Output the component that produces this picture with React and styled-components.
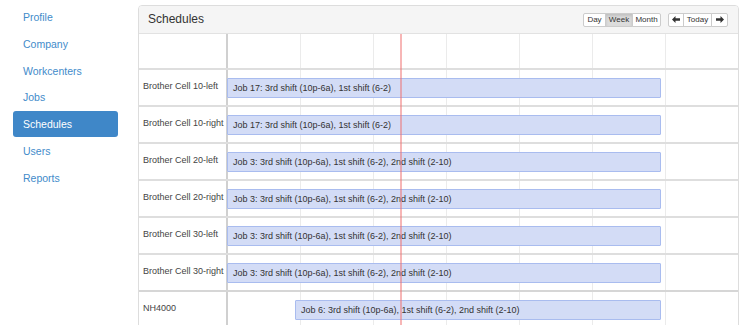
import React from "react";
import styled, { createGlobalStyle } from "styled-components";

const Global = createGlobalStyle`
  html, body { margin: 0; padding: 0; background: #fff; }
  body { font-family: "Liberation Sans", Arial, sans-serif; color: #333; overflow: hidden; }
  * { box-sizing: border-box; }
`;

const Page = styled.div`
  display: flex;
  width: 750px;
  height: 325px;
  overflow: hidden;
`;

const Sidebar = styled.nav`
  width: 138px;
  flex: none;
  padding: 4px 0 0 13px;
  display: flex;
  flex-direction: column;
  gap: 0.8px;
`;

const NavItem = styled.a`
  display: flex;
  align-items: center;
  width: 105px;
  height: 26px;
  padding-left: 10px;
  border-radius: 3px;
  font-size: 10.5px;
  text-decoration: none;
  color: ${(p) => (p.$active ? "#fff" : "#428bca")};
  background: ${(p) => (p.$active ? "#3f87c8" : "transparent")};
`;

const Panel = styled.section`
  margin-top: 5px;
  width: 601px;
  height: 330px;
  border: 1px solid #ddd;
  border-radius: 4px 4px 0 0;
  overflow: hidden;
  flex: none;
`;

const Heading = styled.header`
  height: 28px;
  background: #f5f5f5;
  border-bottom: 1px solid #e2e2e2;
  display: flex;
  align-items: center;
  padding: 0 10px 0 9px;
`;

const Title = styled.h3`
  margin: 0;
  font-size: 12px;
  font-weight: 500;
  color: #333;
  flex: 1;
  padding-bottom: 1px;
`;

const BtnGroup = styled.div`
  display: flex;
  margin-left: 7px;
`;

const Btn = styled.button`
  height: 14px;
  width: ${(p) => p.$w}px;
  padding: 0;
  margin-left: -1px;
  font-family: inherit;
  font-size: 8px;
  color: #333;
  border: 1px solid #ccc;
  background: ${(p) => (p.$active ? "#dcdcdc" : "#fff")};
  box-shadow: ${(p) => (p.$active ? "inset 0 2px 3px rgba(0,0,0,0.12)" : "none")};
  display: flex;
  align-items: center;
  justify-content: center;
  &:first-child { border-radius: 2px 0 0 2px; margin-left: 0; }
  &:last-child { border-radius: 0 2px 2px 0; }
`;

const Grid = styled.div`
  position: relative;
`;

const Row = styled.div`
  display: flex;
  height: ${(p) => (p.$head ? 36 : 37)}px;
  border-bottom: 2px solid ${(p) => (p.$double ? "#d6d6d6" : "#dedede")};
`;

const Label = styled.div`
  width: 89px;
  flex: none;
  border-right: 2px solid #d0d0d0;
  font-size: 9px;
  color: #444;
  display: flex;
  align-items: center;
  padding: 0 0 3px 4px;
  white-space: nowrap;
`;

const Timeline = styled.div`
  position: relative;
  flex: 1;
  display: flex;
`;

const Day = styled.div`
  width: 73px;
  flex: none;
  border-right: 1px solid #ebebeb;
  &:last-child { border-right: none; flex: 1; }
`;

const Bar = styled.div`
  position: absolute;
  top: 8px;
  height: 20px;
  border: 1px solid #a9bcef;
  background: #d3dcf6;
  border-radius: 1px;
  font-size: 9px;
  color: #333;
  display: flex;
  align-items: center;
  padding-left: 5px;
  white-space: nowrap;
`;

const NowLine = styled.div`
  position: absolute;
  z-index: 2;
  top: 0;
  bottom: 0;
  left: 261px;
  width: 2px;
  background-color: rgba(240, 110, 110, 0.5);
`;

const Arrow = ({ dir }) => (
  <svg width="8" height="7" viewBox="0 0 8 7">
    <path
      d={dir === "left" ? "M0 3.5 L3.5 0 V2.3 H8 V4.7 H3.5 V7 Z" : "M8 3.5 L4.5 0 V2.3 H0 V4.7 H4.5 V7 Z"}
      fill="#333"
    />
  </svg>
);

const navItems = ["Profile", "Company", "Workcenters", "Jobs", "Schedules", "Users", "Reports"];

const J17 = "Job 17: 3rd shift (10p-6a), 1st shift (6-2)";
const J3 = "Job 3: 3rd shift (10p-6a), 1st shift (6-2), 2nd shift (2-10)";
const rows = [
  { name: "Brother Cell 10-left", job: J17, left: -1, width: 434 },
  { name: "Brother Cell 10-right", job: J17, left: -1, width: 434 },
  { name: "Brother Cell 20-left", job: J3, left: -1, width: 434 },
  { name: "Brother Cell 20-right", job: J3, left: -1, width: 434 },
  { name: "Brother Cell 30-left", job: J3, left: -1, width: 434 },
  { name: "Brother Cell 30-right", job: J3, left: -1, width: 434, double: true },
  { name: "NH4000", job: "Job 6: 3rd shift (10p-6a), 1st shift (6-2), 2nd shift (2-10)", left: 67, width: 366 },
];

const Days = () => (
  <>
    {Array.from({ length: 7 }).map((_, i) => (
      <Day key={i} />
    ))}
  </>
);

export default function App() {
  return (
    <Page>
      <Global />
      <Sidebar>
        {navItems.map((n) => (
          <NavItem key={n} $active={n === "Schedules"}>
            {n}
          </NavItem>
        ))}
      </Sidebar>
      <Panel>
        <Heading>
          <Title>Schedules</Title>
          <BtnGroup>
            <Btn $w={23}>Day</Btn>
            <Btn $w={28} $active>Week</Btn>
            <Btn $w={29}>Month</Btn>
          </BtnGroup>
          <BtnGroup>
            <Btn $w={16}><Arrow dir="left" /></Btn>
            <Btn $w={29}>Today</Btn>
            <Btn $w={17}><Arrow dir="right" /></Btn>
          </BtnGroup>
        </Heading>
        <Grid>
          <Row $head>
            <Label />
            <Timeline>
              <Days />
            </Timeline>
          </Row>
          {rows.map((r) => (
            <Row key={r.name} $double={r.double}>
              <Label>{r.name}</Label>
              <Timeline>
                <Days />
                <Bar style={{ left: r.left, width: r.width }}>{r.job}</Bar>
              </Timeline>
            </Row>
          ))}
          <NowLine />
        </Grid>
      </Panel>
    </Page>
  );
}
